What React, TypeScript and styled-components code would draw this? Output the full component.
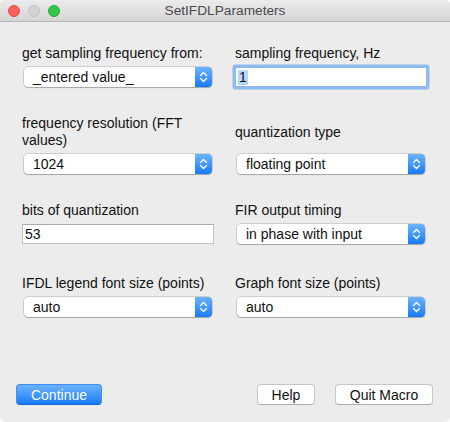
import styled, { createGlobalStyle } from 'styled-components';

const Global = createGlobalStyle`
  html, body {
    margin: 0;
    padding: 0;
    background: #ffffff;
  }
  body {
    font-family: "Helvetica Neue", "Liberation Sans", Arial, sans-serif;
    font-size: 14px;
    color: #111;
  }
`;

const Window = styled.div`
  width: 450px;
  height: 422px;
  box-sizing: border-box;
  background: #ececec;
  border-radius: 5px;
  overflow: hidden;
  display: flex;
  flex-direction: column;
`;

const TitleBar = styled.div`
  height: 22px;
  box-sizing: border-box;
  flex-shrink: 0;
  display: flex;
  align-items: center;
  position: relative;
  background: linear-gradient(to bottom, #ebebeb, #d6d5d6);
  border-bottom: 1px solid #b4b4b4;
  padding-left: 8px;
  gap: 8px;
`;

const Light = styled.span<{ $fill: string; $edge: string }>`
  width: 12px;
  height: 12px;
  border-radius: 50%;
  box-sizing: border-box;
  background: ${({ $fill }) => $fill};
  border: 1px solid ${({ $edge }) => $edge};
`;

const Title = styled.div`
  position: absolute;
  left: 0;
  right: 0;
  top: 0;
  bottom: 0;
  display: flex;
  align-items: center;
  justify-content: center;
  color: #4b4b4b;
  font-size: 13.7px;
  pointer-events: none;
`;

const Body = styled.div`
  flex: 1;
  display: flex;
  flex-direction: column;
  padding: 23px 23px 0 22px;
`;

const Row = styled.div<{ $after?: number }>`
  display: grid;
  grid-template-columns: 192px 192px;
  column-gap: 21px;
  margin-bottom: ${({ $after }) => $after ?? 28}px;
`;

const Field = styled.div`
  display: flex;
  flex-direction: column;
  gap: 5px;
`;

const Label = styled.div`
  flex: 1;
  display: flex;
  align-items: center;
  line-height: 17px;
  font-size: 14px;
  color: #111;
`;

const PopUp = styled.div`
  height: 20px;
  margin: 0 2px;
  box-sizing: border-box;
  display: flex;
  align-items: stretch;
  background: #fff;
  border-radius: 4px;
  box-shadow: 0 0 0 0.5px rgba(0, 0, 0, 0.25), 0 1px 1px rgba(0, 0, 0, 0.2);
  overflow: hidden;
`;

const PopValue = styled.span`
  flex: 1;
  display: flex;
  align-items: center;
  padding-left: 9px;
  font-size: 14px;
  color: #111;
`;

const Stepper = styled.span`
  width: 17px;
  display: flex;
  align-items: center;
  justify-content: center;
  background: linear-gradient(to bottom, #6cb3fa, #187bf7);
`;

const TextBox = styled.div<{ $focused?: boolean }>`
  height: 20px;
  box-sizing: border-box;
  display: flex;
  align-items: center;
  padding-left: 2px;
  background: #fff;
  border: 1px solid ${({ $focused }) => ($focused ? '#8db8ec' : '#c3c3c3')};
  border-top-color: ${({ $focused }) => ($focused ? '#8db8ec' : '#a9a9a9')};
  box-shadow: ${({ $focused }) => ($focused ? '0 0 0 2.5px #8fbaf0' : 'none')};
  border-radius: ${({ $focused }) => ($focused ? '1px' : '0')};
  font-size: 14px;
  color: #111;
`;

const Selected = styled.span`
  background: #b4d6fe;
  line-height: 15px;
  padding: 0 1px;
`;

const Footer = styled.div`
  margin-top: auto;
  display: flex;
  align-items: center;
  padding: 0 17px 17px 16px;
  margin-left: -22px;
  margin-right: -23px;
`;

const Button = styled.button<{ $primary?: boolean; $w: number }>`
  width: ${({ $w }) => $w}px;
  height: 21px;
  box-sizing: border-box;
  border-radius: 4px;
  font-family: inherit;
  font-size: 14px;
  padding: 0;
  cursor: default;
  color: ${({ $primary }) => ($primary ? '#fff' : '#111')};
  background: ${({ $primary }) =>
    $primary ? 'linear-gradient(to bottom, #6cb2fb, #1a7cf8)' : '#fff'};
  border: 1px solid ${({ $primary }) => ($primary ? '#3a8ef5' : '#c6c6c6')};
  border-bottom-color: ${({ $primary }) => ($primary ? '#1565e0' : '#acacac')};
`;

const Spacer = styled.div`
  flex: 1;
`;

const ButtonGroup = styled.div`
  display: flex;
  gap: 20px;
`;

const Chevrons = () => (
  <svg width="9" height="12" viewBox="0 0 9 12">
    <path d="M1.5 4.5 L4.5 1.5 L7.5 4.5" fill="none" stroke="#fff" strokeWidth="1.4" strokeLinecap="round" strokeLinejoin="round" />
    <path d="M1.5 7.5 L4.5 10.5 L7.5 7.5" fill="none" stroke="#fff" strokeWidth="1.4" strokeLinecap="round" strokeLinejoin="round" />
  </svg>
);

const Select = ({ value }: { value: string }) => (
  <PopUp>
    <PopValue>{value}</PopValue>
    <Stepper>
      <Chevrons />
    </Stepper>
  </PopUp>
);

export default function App() {
  return (
    <>
      <Global />
      <Window>
        <TitleBar>
          <Light $fill="#fc605b" $edge="#de4a46" />
          <Light $fill="#d2d2d2" $edge="#c1c1c1" />
          <Light $fill="#34c84a" $edge="#24a836" />
          <Title>SetIFDLParameters</Title>
        </TitleBar>
        <Body>
          <Row>
            <Field>
              <Label>get sampling frequency from:</Label>
              <Select value="_entered value_" />
            </Field>
            <Field>
              <Label>sampling frequency, Hz</Label>
              <TextBox $focused>
                <Selected>1</Selected>
              </TextBox>
            </Field>
          </Row>
          <Row>
            <Field>
              <Label>frequency resolution (FFT values)</Label>
              <Select value="1024" />
            </Field>
            <Field>
              <Label>quantization type</Label>
              <Select value="floating point" />
            </Field>
          </Row>
          <Row $after={31}>
            <Field>
              <Label>bits of quantization</Label>
              <TextBox>53</TextBox>
            </Field>
            <Field>
              <Label>FIR output timing</Label>
              <Select value="in phase with input" />
            </Field>
          </Row>
          <Row>
            <Field>
              <Label>IFDL legend font size (points)</Label>
              <Select value="auto" />
            </Field>
            <Field>
              <Label>Graph font size (points)</Label>
              <Select value="auto" />
            </Field>
          </Row>
          <Footer>
            <Button $primary $w={86}>Continue</Button>
            <Spacer />
            <ButtonGroup>
              <Button $w={58}>Help</Button>
              <Button $w={98}>Quit Macro</Button>
            </ButtonGroup>
          </Footer>
        </Body>
      </Window>
    </>
  );
}
